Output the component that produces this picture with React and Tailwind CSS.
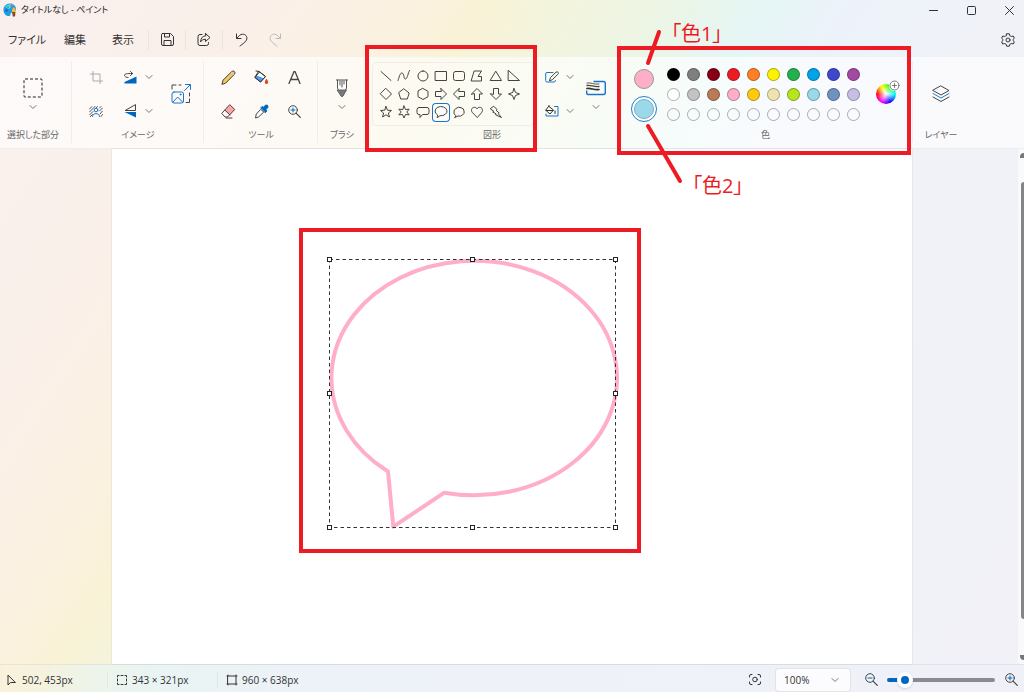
import { useState } from "react";
import clsx from "clsx";

const PALETTE = [
  ["#000000", "#7f7f7f", "#880015", "#ed1c24", "#ff7f27", "#fff200", "#22b14c", "#00a2e8", "#3f48cc", "#a349a4"],
  ["#ffffff", "#c3c3c3", "#b97a57", "#ffaec9", "#ffc90e", "#efe4b0", "#b5e61d", "#99d9ea", "#7092be", "#c8bfe7"],
  Array(10).fill("transparent"),
];

// every outline sits in a 14 x 14 box
const SHAPES = [
  { name: "直線", d: "M2 2.5L12 11.5" },
  { name: "曲線", d: "M1 11.5C2 9 3 3.5 5 4C7.500 4.500 6.500 10.500 8.500 10C10.500 9.500 11 4 12.500 1.500" },
  { name: "楕円", d: "M7 2A5 5 0 1 1 7 12A5 5 0 1 1 7 2Z" },
  { name: "四角形", d: "M1.5 2.500H12.500V11.500H1.500Z" },
  { name: "角丸四角形", d: "M3.500 2.500H10.500Q12.500 2.500 12.500 4.500V9.500Q12.500 11.500 10.500 11.500H3.500Q1.500 11.500 1.500 9.500V4.500Q1.500 2.500 3.500 2.500Z" },
  { name: "多角形", d: "M4.500 2H11.500L8 7.500H11.500V12H1.500Z" },
  { name: "三角形", d: "M7 2.500L12.500 11.500H1.500Z" },
  { name: "直角三角形", d: "M1.500 1.500L12.500 11.500H1.500Z" },
  { name: "ひし形", d: "M7 1.500L12.500 7L7 12.500L1.500 7Z" },
  { name: "五角形", d: "M7 2L12.200 6L10.300 12H3.700L1.800 6Z" },
  { name: "六角形", d: "M7 1.500L12 4.300V9.700L7 12.500L2 9.700V4.300Z" },
  { name: "右矢印", d: "M7 1.500L12.500 7L7 12.500V9.500H1.500V4.500H7Z" },
  { name: "左矢印", d: "M7 1.500L1.500 7L7 12.500V9.500H12.500V4.500H7Z" },
  { name: "上矢印", d: "M1.500 7L7 1.500L12.500 7H9.500V12.500H4.500V7Z" },
  { name: "下矢印", d: "M1.500 7L7 12.500L12.500 7H9.500V1.500H4.500V7Z" },
  { name: "四つ星", d: "M7 1.500L8.500 5.500L12.500 7L8.500 8.500L7 12.500L5.500 8.500L1.500 7L5.500 5.500Z" },
  { name: "五つ星", d: "M7 1.500L8.500 5.200L12.500 5.500L9.400 8L10.400 12L7 9.800L3.600 12L4.600 8L1.500 5.500L5.500 5.200Z" },
  { name: "六つ星", d: "M7 1L8.500 4.500L12.200 4.200L9.800 7L12.200 9.800L8.500 9.500L7 13L5.500 9.500L1.800 9.800L4.200 7L1.800 4.200L5.500 4.500Z" },
  { name: "角丸吹き出し", d: "M3 2.500H11Q13 2.500 13 4.500V7.500Q13 9.500 11 9.500H6.500L4 12.500V9.500H3Q1 9.500 1 7.500V4.500Q1 2.500 3 2.500Z" },
  { name: "円形吹き出し", d: "M3.300 9.800A6 4.600 0 1 1 6 10.700L3.500 12.500Z" },
  { name: "雲形吹き出し", d: "M3.500 10.500Q1.500 9 2 7Q1.800 4.500 4 3.500Q6.500 1.300 9 2.700Q12 3.300 12 6Q13 8.500 10.500 10Q8.500 11.800 6 11L3 12.500Z" },
  { name: "ハート", d: "M7 12.300L2.200 7.300C0.500 5 2 2.300 4.300 2.300C5.700 2.300 6.500 3 7 4C7.500 3 8.300 2.300 9.700 2.300C12 2.300 13.500 5 11.800 7.300Z" },
  { name: "稲妻", d: "M5 1.500L8 4.500L7 5.200L10.200 8L9.300 8.700L12.500 12.500L6.500 9.800L7.300 9L3.700 7L4.800 6.200L1.500 4Z" },
];

function Icon({ w = 16, h = w, className, children }) {
  return (
    <svg
      width={w}
      height={h}
      viewBox={`0 0 ${w} ${h}`}
      fill="none"
      stroke="currentColor"
      strokeLinecap="round"
      strokeLinejoin="round"
      className={clsx("shrink-0", className)}
      aria-hidden="true"
    >
      {children}
    </svg>
  );
}

function Chevron({ className }) {
  return (
    <Icon w={8} h={6} className={clsx("text-[#777]", className)}>
      <path d="M1 1.500L4 4.500L7 1.500" />
    </Icon>
  );
}

function IconButton({ label, className, children }) {
  return (
    <button type="button" aria-label={label} className={clsx("flex items-center justify-center", className)}>
      {children}
    </button>
  );
}

function Group({ label, className, last, children }) {
  return (
    <section aria-label={label} className={clsx("relative flex shrink-0 flex-col pt-[3px]", className)}>
      <div className="flex h-[68px] items-center justify-center">{children}</div>
      <div className="text-center text-[9px] leading-[13px] text-[#666]">{label}</div>
      {!last && <span className="absolute right-0 top-1 h-[82px] w-px bg-black/5" />}
    </section>
  );
}

function DropTool({ label, children }) {
  return (
    <button type="button" aria-label={label} className="flex flex-col items-center gap-1.5">
      {children}
      <Chevron />
    </button>
  );
}

function TitleBar() {
  return (
    <header className="flex h-5 items-center pl-[3px]">
      <Icon w={14} h={14}>
        <path d="M7 0.500C2.800 0.500 0.300 3.500 0.500 7.500C0.700 11.500 4 13.500 6.500 13C8 12.600 7 10.700 8 10C9.500 9 13 9.500 13 6C13 2.500 10 0.500 7 0.500Z" fill="#1b9de2" stroke="none" />
        <path d="M2 4C4 1.200 8 0.600 10.500 2.200L6 6Z" fill="#5fd0f5" stroke="none" />
        <circle cx="3.500" cy="7.500" r="1.200" fill="#1566b7" stroke="none" />
        <circle cx="5" cy="4" r="1" fill="#3fae6a" stroke="none" />
        <circle cx="8.500" cy="3" r="1" fill="#e8562a" stroke="none" />
        <path d="M10.500 4L12.500 6V9H9V6.500Z" fill="#f5b63c" stroke="none" />
        <path d="M9 9H12.500L12 13.500H9.800Z" fill="#8a4b1d" stroke="none" />
      </Icon>
      <h1 className="pl-1 text-[9px] leading-4 text-[#222]">タイトルなし - ペイント</h1>
      <div className="-mr-1 ml-auto flex text-[#333]">
        <IconButton label="最小化" className="h-5 w-[38px]">
          <Icon w={9}><path d="M0.500 4.500H8.500" /></Icon>
        </IconButton>
        <IconButton label="最大化" className="h-5 w-[38px]">
          <Icon w={9}><rect x="0.500" y="0.500" width="8" height="8" rx="1" /></Icon>
        </IconButton>
        <IconButton label="閉じる" className="h-5 w-[38px]">
          <Icon w={9}><path d="M0.500 0.500L8.500 8.500M8.500 0.500L0.500 8.500" /></Icon>
        </IconButton>
      </div>
    </header>
  );
}

function MenuBar() {
  return (
    <nav className="flex h-[37px] items-center pl-2 pt-0.5 text-[11px] leading-5 text-[#333]">
      <button type="button" className="w-14 text-left">ファイル</button>
      <button type="button" className="w-12 text-left">編集</button>
      <button type="button" className="w-9 text-left">表示</button>
      <span className="h-5 w-px bg-black/5" />
      <IconButton label="保存" className="w-9">
        <Icon w={13}>
          <path d="M1.500 0.500H9.500L12.500 3.500V11Q12.500 12.500 11 12.500H2Q0.500 12.500 0.500 11V1.500Q0.500 0.500 1.500 0.500Z" />
          <path d="M3.500 0.500V4H8.500V0.500M3 12.500V7.500H10V12.500" />
        </Icon>
      </IconButton>
      <span className="h-5 w-px bg-black/5" />
      <IconButton label="共有" className="w-9">
        <Icon w={14} h={13}>
          <path d="M5 1.500H3Q1 1.500 1 3.500V10.500Q1 12.500 3 12.500H9.500Q11.500 12.500 11.500 10.500V9.500" />
          <path d="M8.500 0.500L13 4.500L8.500 8.500V6.200Q5 6 3.500 9Q4 3 8.500 2.800Z" />
        </Icon>
      </IconButton>
      <span className="h-5 w-px bg-black/5" />
      <IconButton label="元に戻す" className="w-9">
        <Icon w={13} h={14}>
          <path d="M1.500 1V5.500H6M1.800 5.200L4.500 2.500C8 -0.500 12.500 2 11.800 6C11.500 8.500 7.500 11 5 13" />
        </Icon>
      </IconButton>
      <IconButton label="やり直し" className="w-8 text-[#bbb]">
        <Icon w={13} h={14}>
          <path d="M11.500 1V5.500H7M11.200 5.200L8.500 2.500C5 -0.500 0.500 2 1.200 6C1.500 8.500 5.500 11 8 13" />
        </Icon>
      </IconButton>
      <IconButton label="設定" className="ml-auto w-8">
        <Icon w={14}>
          <path d="M5.700 0.800H8.300L8.800 2.700L10.300 3.500L12.200 3L13.400 5.200L12 6.500V7.500L13.400 8.800L12.200 11L10.300 10.500L8.800 11.300L8.300 13.200H5.700L5.200 11.300L3.700 10.500L1.800 11L0.600 8.800L2 7.500V6.500L0.600 5.200L1.800 3L3.700 3.500L5.200 2.700Z" />
          <circle cx="7" cy="7" r="2" />
        </Icon>
      </IconButton>
    </nav>
  );
}

function ImageTools() {
  return (
    <>
      <div className="grid grid-cols-[38px_30px_8px] grid-rows-[34px_34px]">
        <IconButton label="トリミング" className="text-[#aaa]">
          <Icon w={13}><path d="M3 0.500V10H12.500M0.500 3H10V12.500" /></Icon>
        </IconButton>
        <IconButton label="回転">
          <Icon w={14} h={13}>
            <path d="M5 6.500C3 6.500 1.500 5.500 1.500 4.300C1.500 2.800 3.500 2.500 9.500 2.500M7.500 0.500L9.700 2.500L7.500 4.500" stroke="#444" />
            <path d="M13.500 5.500V12.500H1.500V11Z" fill="#0067c0" stroke="none" />
          </Icon>
        </IconButton>
        <IconButton label="回転のオプション"><Chevron /></IconButton>
        <IconButton label="背景の削除">
          <Icon w={14} h={11}>
            <path d="M0.500 3L3 0.500M0.500 6L6 0.500M0.500 9L4 5.500M1 11L3.500 8.500M7 2L8.500 0.500M10.500 2L12 0.500M10.500 5L13.500 2M11 8L13.500 5M12 10.500L13.500 8.500" stroke="#555" />
            <circle cx="7" cy="4" r="1.800" stroke="#1a73c9" />
            <path d="M3.500 10.500C3.500 6.500 10.500 6.500 10.500 10.500" stroke="#1a73c9" />
          </Icon>
        </IconButton>
        <IconButton label="反転">
          <Icon w={13} h={14}>
            <path d="M11.500 1V6.500H1.500Z" stroke="#444" />
            <path d="M12 8V13.500L0.500 8Z" fill="#0067c0" stroke="none" />
          </Icon>
        </IconButton>
        <IconButton label="反転のオプション"><Chevron /></IconButton>
      </div>
      <IconButton label="サイズ変更" className="ml-2.5 w-9">
        <Icon w={20}>
          <path d="M1 5V1H5M8 1H10M18.500 9V12M18.500 15V18.500H15" stroke="#444" />
          <path d="M13.500 6.500L19 1M14.500 0.500H19.500V5.500" stroke="#1a73c9" />
          <rect x="1" y="8" width="11.500" height="11" rx="2" stroke="#1a73c9" />
          <path d="M2 18L6.700 13L11.500 18" stroke="#1a73c9" />
          <circle cx="9.500" cy="10.500" r="0.500" stroke="#1a73c9" />
        </Icon>
      </IconButton>
    </>
  );
}

function Tools() {
  return (
    <div className="grid grid-cols-[33px_33px_33px] grid-rows-[34px_34px]">
      <IconButton label="鉛筆">
        <Icon w={15}>
          <path d="M1 14L2 10.200L10.800 1.500Q12.200 0.400 13.500 1.600Q14.600 2.900 13.500 4.200L4.800 13Z" fill="#f2c968" stroke="#4a3d26" />
          <path d="M11 1.500L13.500 4L12.500 5L10 2.500Z" fill="#ccc" stroke="none" />
        </Icon>
      </IconButton>
      <IconButton label="塗りつぶし">
        <Icon w={15}>
          <path d="M5 1.500L11.500 6.500L6.500 12L1 7.500Z" fill="#fff" stroke="#444" />
          <path d="M2.500 5.500L9.800 8.300L6.500 12L1 7.500Z" fill="#4b9bea" stroke="none" />
          <path d="M2 1L5 1.500L11.500 6.500L6.500 12L1 7.500L5 2.500" stroke="#333" />
          <path d="M12.500 8.500Q14.700 11.500 14.200 13Q12.500 14.800 10.800 13Q10.300 11.500 12.500 8.500Z" fill="#d9481c" stroke="none" />
        </Icon>
      </IconButton>
      <IconButton label="テキスト">
        <Icon w={13}><path d="M1 12.500L6 0.500H7L12 12.500M3 8.500H10" stroke="#444" strokeWidth="1.300" /></Icon>
      </IconButton>
      <IconButton label="消しゴム">
        <Icon w={15}>
          <path d="M8.500 1L13.500 5.500L9 11L4 6.500Z" fill="#f7a6a6" stroke="none" />
          <path d="M9 0.900L13.800 5.500L6.500 13H4L1 9.700Z M4 6.200L9 11M5 14H11" stroke="#553a3a" />
        </Icon>
      </IconButton>
      <IconButton label="色の選択">
        <Icon w={15}>
          <path d="M7 5.500L9.700 8.200L4.500 13L1.500 14L2.200 10.500Z" stroke="#444" fill="#fff" />
          <path d="M7 3.500L8.500 2.500L9.500 3.300Q11.500 0 13.500 1.200Q15.300 3 12 5.500L12.800 7L11.500 8.500Z" fill="#0067c0" stroke="#0067c0" />
        </Icon>
      </IconButton>
      <IconButton label="拡大鏡">
        <Magnifier plus />
      </IconButton>
    </div>
  );
}

function Magnifier({ plus }) {
  return (
    <Icon w={13} className="text-[#444]">
      <circle cx="5" cy="5" r="4.300" />
      <path d="M8.300 8.300L12.300 12.300" strokeWidth="1.200" />
      <path d={plus ? "M3 5H7M5 3V7" : "M3 5H7"} stroke="#0067c0" />
    </Icon>
  );
}

function Shapes() {
  const [active, setActive] = useState("円形吹き出し");

  return (
    <>
      <div className="flex h-16 w-[162px] items-center rounded border border-black/5 pl-1">
        <div className="grid h-[55px] w-[146px] grid-cols-8 grid-rows-3 text-[#444]">
          {SHAPES.map((s) => (
            <button
              key={s.name}
              type="button"
              aria-label={s.name}
              aria-pressed={active === s.name}
              onClick={() => setActive(s.name)}
              className={clsx(
                "flex items-center justify-center rounded",
                active === s.name && "bg-white/60 ring-1 ring-inset ring-[#1a73c9]"
              )}
            >
              <Icon w={14}><path d={s.d} /></Icon>
            </button>
          ))}
        </div>
      </div>
      <div className="ml-1 grid grid-cols-[28px_8px] grid-rows-[34px_34px]">
        <IconButton label="輪郭">
          <Icon w={14} h={12}>
            <path d="M8 1.500H2Q0.700 1.500 0.700 3V9.500Q0.700 11 2 11H9Q10.500 11 10.500 9.500" stroke="#1a73c9" />
            <path d="M4.500 9.500L5.500 6.500L11 1.200Q12.500 0.300 13.200 1.500Q13.800 2.500 12.800 3.300L7.500 8.500Z" stroke="#444" />
          </Icon>
        </IconButton>
        <IconButton label="輪郭のオプション"><Chevron /></IconButton>
        <IconButton label="塗りつぶしの種類">
          <Icon w={14} h={12}>
            <path d="M9.500 1.500H13V11H1V9" stroke="#1a73c9" />
            <path d="M4 1.500L8.500 5L5 9L1 5.500ZM1 5.500H8M4 1.500V0.500M10 6V8.500" stroke="#333" />
          </Icon>
        </IconButton>
        <IconButton label="塗りつぶしのオプション"><Chevron /></IconButton>
      </div>
      <div className="ml-3 mr-1.5">
        <DropTool label="サイズ">
          <Icon w={20}>
            <path d="M8 3.500H17.500Q19.300 3.500 19.300 5.500V14.500Q19.300 16.500 17.500 16.500H2Q0.700 16.500 0.700 15V13" stroke="#1a73c9" strokeWidth="1.400" />
            <path d="M1 5C5 4 8 7 13 6" stroke="#555" />
            <path d="M1 7.500C5 6.500 8 9.500 13 8.500" stroke="#444" strokeWidth="1.300" />
            <path d="M1 10.500C5 9.500 8 12.500 13 11.500" stroke="#333" strokeWidth="1.700" />
          </Icon>
        </DropTool>
      </div>
    </>
  );
}

function Colors() {
  return (
    <>
      <div className="flex w-7 flex-col items-center gap-1">
        <button type="button" aria-label="色 1" className="m-[3px] size-5 rounded-full border border-[#999] bg-[#ffaec9]" />
        <button type="button" aria-label="色 2" className="flex size-[26px] items-center justify-center rounded-full border border-[#1a7fd4] bg-white/80">
          <span className="size-5 rounded-full border border-[#8ab] bg-[#99d9ea]" />
        </button>
      </div>
      <div className="ml-1.5 grid grid-cols-[repeat(10,20px)] grid-rows-[repeat(3,20px)]">
        {PALETTE.flat().map((color, i) => (
          <button
            key={i}
            type="button"
            aria-label={`パレット ${i + 1}`}
            className="m-auto size-[13px] rounded-full border border-black/30"
            style={{ backgroundColor: color }}
          />
        ))}
      </div>
      <button type="button" aria-label="色の編集" className="relative ml-3 mr-1.5 size-5 rounded-full bg-[radial-gradient(circle,#fff_0%,transparent_65%),conic-gradient(from_270deg,#f00,#ff0,#0f0,#0ff,#00f,#f0f,#f00)]">
        <span className="absolute -right-1 -top-1 rounded-full bg-white">
          <Icon w={11} className="text-[#777]">
            <circle cx="5.500" cy="5.500" r="4.500" />
            <path d="M5.500 3.500V7.500M3.500 5.500H7.500" />
          </Icon>
        </span>
      </button>
    </>
  );
}

function Ribbon() {
  return (
    <div className="flex h-[92px] border-b border-black/5 bg-white/65">
      <Group label="選択した部分" className="w-[72px] pr-1.5">
        <DropTool label="選択">
          <Icon w={20} className="text-[#222]">
            <rect x="1" y="1" width="18" height="18" rx="1" strokeDasharray="3 2" strokeLinecap="butt" />
          </Icon>
        </DropTool>
      </Group>
      <Group label="イメージ" className="w-[132px]">
        <ImageTools />
      </Group>
      <Group label="ツール" className="w-[114px]">
        <Tools />
      </Group>
      <Group label="ブラシ" className="w-12">
        <DropTool label="ブラシの種類">
          <Icon w={12} h={20}>
            <path d="M1.500 2V10L5 17.500Q6 19.500 7 17.500L10.500 10V2" fill="#fff" stroke="#555" />
            <path d="M1.500 12H10.500L7 18Q6 19.500 5 18Z" fill="#777" stroke="#666" />
            <path d="M0.500 2H11.500M4 3V7M6 3V9M8 3V6" stroke="#555" />
          </Icon>
        </DropTool>
      </Group>
      <Group label="図形" className="w-[252px]">
        <Shapes />
      </Group>
      <Group label="色" className="w-[295px]">
        <Colors />
      </Group>
      <Group label="レイヤー" className="w-14" last>
        <IconButton label="レイヤー" className="size-8">
          <Icon w={18} h={18} className="text-[#444]">
            <path d="M9 1L17 5.500L9 10L1 5.500Z" />
            <path d="M1 8.500L9 13L17 8.500" stroke="#1a7fd4" />
            <path d="M1 12L9 16.500L17 12" />
          </Icon>
        </IconButton>
      </Group>
    </div>
  );
}

const HANDLES = [
  [329, 259], [472, 259], [615, 259],
  [329, 393], [615, 393],
  [329, 527], [472, 527], [615, 527],
];

function Workspace() {
  return (
    <main className="relative flex min-h-0 flex-1 px-28">
      <div className="relative flex-1 overflow-hidden bg-white shadow-[0_0_0_1px_rgba(0,0,0,0.04)]">
        <div className="absolute left-[187px] top-[79px] h-[325px] w-[342px] border-4 border-[#ed1c24]">
          <svg width="334" height="317" viewBox="303 232 334 317" fill="none" aria-label="吹き出し">
            <path d="M444.300 492.700A142.800 117.300 0 1 0 388 471.500L393.300 526.700Z" stroke="#ffaec9" strokeWidth="4" strokeLinejoin="round" />
            <rect x="329.500" y="259.500" width="286" height="268" stroke="#333" strokeDasharray="3.500 3" />
            {HANDLES.map(([x, y]) => (
              <rect key={`${x}-${y}`} x={x - 1.5} y={y - 1.5} width="4" height="4" fill="#fff" stroke="#222" />
            ))}
          </svg>
        </div>
      </div>
      <div className="absolute inset-y-0 right-0 flex w-1.5 flex-col items-end justify-between rounded-l bg-white/60 pb-1 pt-1">
        <span className="h-[5px] w-1 rounded-tl-full bg-[#777]" />
        <span className="mb-9 mt-6 w-[3px] flex-1 rounded-l bg-[#858585]" />
        <span className="h-[5px] w-1 rounded-bl-full bg-[#777]" />
      </div>
    </main>
  );
}

function StatusBar() {
  const [zoom, setZoom] = useState(11);

  return (
    <footer className="flex h-7 items-center border-t border-black/5 bg-[linear-gradient(to_right,transparent_0%,#e9f4f3_15%,#edf2f8_30%,#f0f1f8_100%)] pt-0.5 text-[10px] leading-4 text-[#333]">
      <div className="flex w-[108px] items-center gap-1 border-r border-black/5 pl-1.5">
        <Icon w={12}><path d="M2 1.500V11L4.500 8.500H9Z" /></Icon>
        502, 453px
      </div>
      <div className="flex w-[110px] items-center gap-1 border-r border-black/5 pl-2">
        <Icon w={12}>
          <path d="M1.500 3V1.500H3M5 1.500H7M9 1.500H10.500V3M10.500 5V7M10.500 9V10.500H9M7 10.500H5M3 10.500H1.500V9M1.500 7V5" />
        </Icon>
        343 × 321px
      </div>
      <div className="flex items-center gap-1 pl-2">
        <Icon w={12}>
          <rect x="2" y="2" width="8" height="8" />
          <path d="M2 1V2H1M10 1V2H11M2 11V10H1M10 11V10H11" />
        </Icon>
        960 × 638px
      </div>
      <IconButton label="ウィンドウに合わせる" className="ml-auto w-8">
        <Icon w={12} h={11}>
          <path d="M0.500 3V2Q0.500 0.500 2 0.500H3M9 0.500H10Q11.500 0.500 11.500 2V3M11.500 8V9Q11.500 10.500 10 10.500H9M3 10.500H2Q0.500 10.500 0.500 9V8" />
          <circle cx="6" cy="5.500" r="2.300" />
        </Icon>
      </IconButton>
      <div className="relative ml-1">
        <select aria-label="ズーム" className="h-6 w-[76px] appearance-none rounded border border-black/10 bg-white/80 pl-2 text-[10px] leading-4">
          <option>100%</option>
        </select>
        <Chevron className="pointer-events-none absolute right-3 top-[9px]" />
      </div>
      <IconButton label="縮小" className="ml-2 w-6">
        <Magnifier />
      </IconButton>
      <input
        type="range"
        aria-label="ズームスライダー"
        value={zoom}
        onChange={(e) => setZoom(Number(e.target.value))}
        className="ml-1 h-4 w-[108px] appearance-none bg-transparent [&::-webkit-slider-runnable-track]:h-1 [&::-webkit-slider-runnable-track]:rounded-full [&::-webkit-slider-runnable-track]:bg-[linear-gradient(to_right,#0067c0_17%,#8a8a90_17%)] [&::-webkit-slider-thumb]:-mt-1.5 [&::-webkit-slider-thumb]:size-4 [&::-webkit-slider-thumb]:appearance-none [&::-webkit-slider-thumb]:rounded-full [&::-webkit-slider-thumb]:border-4 [&::-webkit-slider-thumb]:border-white [&::-webkit-slider-thumb]:bg-[#0067c0] [&::-webkit-slider-thumb]:shadow"
      />
      <IconButton label="拡大" className="ml-1 mr-px w-6">
        <Magnifier plus />
      </IconButton>
    </footer>
  );
}

// red marks that lie over the ribbon
function Annotations() {
  return (
    <div className="pointer-events-none absolute inset-0 text-[20px] leading-6 text-[#ed1c24]">
      <div className="absolute left-[365px] top-[45px] h-[107px] w-[172px] border-4 border-[#ed1c24]" />
      <div className="absolute left-[617px] top-[46px] h-[109px] w-[294px] border-4 border-[#ed1c24]" />
      <svg className="absolute left-[640px] top-[24px]" width="48" height="164" viewBox="640 24 48 164" stroke="#ed1c24" strokeWidth="4" strokeLinecap="round" aria-hidden="true">
        <path d="M659 32L648 63M648 126L680 181" />
      </svg>
      <span className="absolute left-[671px] top-[22px]">「色1」</span>
      <span className="absolute left-[692px] top-[174px]">「色2」</span>
    </div>
  );
}

export default function App() {
  return (
    <div className="relative flex h-screen flex-col overflow-hidden bg-[linear-gradient(123deg,#f9efee_0%,#faf0e9_18%,#faf1e0_28%,#f9f2d6_33%,#f4f4dc_37%,#edf5e4_45%,#e5f6f5_52%,#edf2fa_58%,#f0f2f8_68%,#f1f1f7_100%)] font-['Open_Sans','Noto_Sans_CJK_JP',sans-serif] [font-feature-settings:'palt']">
      <TitleBar />
      <MenuBar />
      <Ribbon />
      <Workspace />
      <StatusBar />
      <Annotations />
    </div>
  );
}
